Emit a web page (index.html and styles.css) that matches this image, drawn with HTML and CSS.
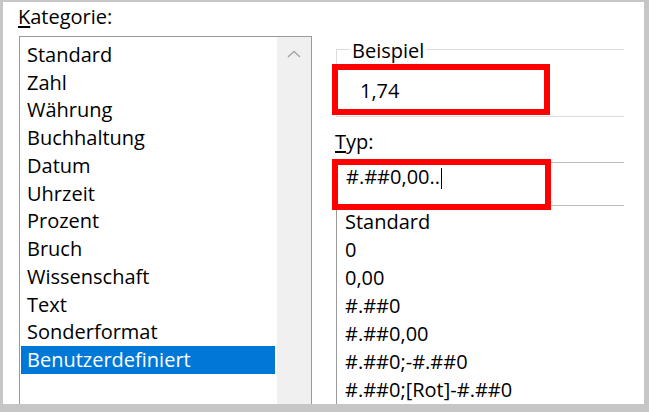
FILE: index.html
```html
<!DOCTYPE html>
<html lang="de">

<head>
    <meta charset="UTF-8">
    <meta name="viewport" content="width=device-width, initial-scale=1.0">
    <title>Zellen formatieren</title>
    <link rel="stylesheet" href="styles.css">
</head>

<body>
    <div class="dialog">
        <div class="col-left">
            <div class="label"><u>K</u>ategorie:</div>
            <div class="cat-list">
                <ul class="items">
                    <li>Standard</li>
                    <li>Zahl</li>
                    <li>Währung</li>
                    <li>Buchhaltung</li>
                    <li>Datum</li>
                    <li>Uhrzeit</li>
                    <li>Prozent</li>
                    <li>Bruch</li>
                    <li>Wissenschaft</li>
                    <li>Text</li>
                    <li>Sonderformat</li>
                    <li class="selected">Benutzerdefiniert</li>
                </ul>
                <div class="scrollbar">
                    <svg width="14" height="8" viewBox="0 0 14 8">
                        <polyline points="1,7 7,1.5 13,7" fill="none" stroke="#a6a6a6" stroke-width="1.5" />
                    </svg>
                </div>
            </div>
        </div>
        <div class="col-right">
            <fieldset class="group">
                <legend>Beispiel</legend>
                <div class="sample">1,74<span class="mark"></span></div>
            </fieldset>
            <div class="label typ-label"><u>T</u>yp:</div>
            <div class="typ-field">
                <span>#.##0,00..</span><span class="caret"></span>
                <span class="mark"></span>
            </div>
            <ul class="typ-list">
                <li>Standard</li>
                <li>0</li>
                <li>0,00</li>
                <li>#.##0</li>
                <li>#.##0,00</li>
                <li>#.##0;-#.##0</li>
                <li>#.##0;[Rot]-#.##0</li>
            </ul>
        </div>
    </div>
</body>

</html>
```

FILE: styles.css
```css
* {
    margin: 0;
    padding: 0;
    box-sizing: border-box;
}
body {
    padding: 2px 5px 8px 3px;
    background-color: #c6c6c6;
    font-family: "Open Sans", "Noto Sans", sans-serif;
    font-size: 20px;
    color: #000;
}
.dialog {
    display: flex;
    height: 402px;
    overflow: hidden;
    background-color: #fff;
}
.label {
    line-height: 24px;
    margin-left: -1px;
}
.label u {
    text-underline-offset: 2px;
}

/* linke Spalte */
.col-left {
    width: 293px;
    margin-left: 16px;
    padding-top: 3px;
}
.cat-list {
    display: flex;
    height: 380px;
    margin-top: 7px;
    border: 1px solid #9a9a9a;
}
.items {
    list-style: none;
    width: 254px;
    margin: 3.75px 2px 0 1px;
}
.items li {
    height: 27.75px;
    line-height: 27.75px;
    padding-left: 6px;
}
.items .selected {
    background-color: #0078d7;
    color: #fff;
}
.scrollbar {
    flex: 1;
    display: flex;
    justify-content: center;
    align-items: flex-start;
    padding-top: 13px;
    background-color: #f0f0f0;
}

/* rechte Spalte */
.col-right {
    width: 288px;
    margin-left: 24px;
    padding-top: 33px;
}
.group {
    min-width: 0;
    border: 1px solid #dcdcdc;
    border-right: none;
}
.group legend {
    margin-left: 13px;
    padding: 4px 2px 0;
    line-height: 24px;
}
.sample {
    position: relative;
    height: 53px;
    padding: 14px 0 0 23px;
    line-height: 28px;
}
.mark {
    position: absolute;
    border: 6px solid #f00;
}
.sample .mark {
    left: -5px;
    top: 1px;
    width: 218px;
    height: 51px;
}
.typ-label {
    margin-top: 13px;
}
.typ-field {
    position: relative;
    height: 44px;
    margin-top: 8px;
    padding-left: 9px;
    border: 1px solid #bcbcbc;
    border-right: none;
    line-height: 28px;
}
.caret {
    display: inline-block;
    width: 1px;
    height: 21px;
    margin-left: 1px;
    vertical-align: middle;
    background-color: #000;
}
.typ-field .mark {
    left: -5px;
    top: -4px;
    width: 219px;
    height: 51px;
}
.typ-list {
    list-style: none;
    height: 220px;
    padding: 2px 0 0 8px;
    border-left: 1px solid #9a9a9a;
}
.typ-list li {
    line-height: 28px;
}
```
